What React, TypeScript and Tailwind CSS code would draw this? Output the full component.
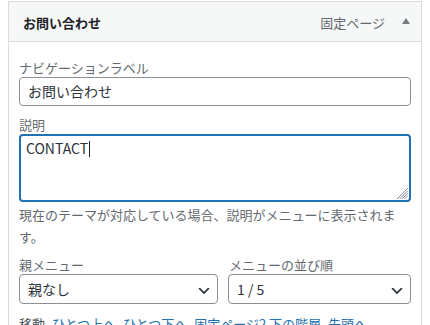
import React from "react";

const font = { fontFamily: '"Noto Sans CJK JP", "Noto Sans", sans-serif' };

function Chevron() {
  return (
    <svg
      viewBox="0 0 20 20"
      className="pointer-events-none absolute right-[5px] top-[8px] h-4 w-4"
    >
      <path d="M5 6l5 5 5-5 2 1-7 7-7-7 2-1z" fill="#2c3338" />
    </svg>
  );
}

function Grip() {
  return (
    <svg
      viewBox="0 0 14 14"
      className="pointer-events-none absolute bottom-[1px] right-[1px] h-[14px] w-[14px]"
    >
      <g stroke="#8c8f94" strokeWidth="1">
        <line x1="3" y1="14" x2="14" y2="3" />
        <line x1="5.5" y1="14" x2="14" y2="5.5" />
        <line x1="8" y1="14" x2="14" y2="8" />
        <line x1="10.5" y1="14" x2="14" y2="10.5" />
      </g>
    </svg>
  );
}

export default function App() {
  return (
    <div className="min-h-[325px] w-[430px] bg-white pt-px" style={font}>
      <div className="ml-2 w-[414px] border border-[#dcdcde] bg-white">
        <div className="flex h-10 items-center justify-between border-b border-[#dcdcde] bg-[#f6f7f7] pl-[14px] pr-[11px] pt-[2px]">
          <span className="text-[13px] font-bold text-[#1d2327]">お問い合わせ</span>
          <div className="flex items-center gap-[17px]">
            <span className="text-[13px] text-[#646970]">固定ページ</span>
            <svg viewBox="0 0 8 6" className="mb-[3px] h-[6px] w-[8px]">
              <path d="M0 6L4 0L8 6Z" fill="#787c82" />
            </svg>
          </div>
        </div>

        <div className="px-[10px] pt-[16px] text-[#2c3338]">
          <label className="block text-[13px] leading-[19px] text-[#646970]">
            ナビゲーションラベル
          </label>
          <div className="flex h-[29px] items-center rounded-[4px] border border-[#8c8f94] px-[8px] text-[14px]">
            お問い合わせ
          </div>

          <label className="mt-[10px] block text-[13px] leading-[18px] text-[#646970]">
            説明
          </label>
          <div className="relative h-[68px] rounded-[4px] border-2 border-[#2271b1] px-[5px] pt-[2px] text-[14px] leading-[20px]">
            CONTACT
            <span className="ml-px inline-block h-[16px] w-px bg-[#1d2327] align-[-3px]" />
            <Grip />
          </div>

          <p className="mt-[2px] text-[13px] leading-[22px] text-[#646970]">
            現在のテーマが対応している場合、説明がメニューに表示されます。
          </p>

          <div className="mt-[7px] flex gap-[10px]">
            <div className="w-[199px]">
              <label className="block text-[13px] leading-[19px] text-[#646970]">
                親メニュー
              </label>
              <div className="relative flex h-[30px] items-center rounded-[4px] border border-[#8c8f94] px-[8px] text-[14px]">
                親なし
                <Chevron />
              </div>
            </div>
            <div className="w-[183px]">
              <label className="block pl-[1px] text-[13px] leading-[19px] text-[#646970]">
                メニューの並び順
              </label>
              <div className="relative flex h-[30px] items-center rounded-[4px] border border-[#8c8f94] px-[8px] text-[14px]">
                1 / 5
                <Chevron />
              </div>
            </div>
          </div>

          <div className="mt-[10px] flex gap-[7px] text-[13px] leading-[19px]">
            <span className="text-[#50575e]">移動</span>
            <a className="text-[#2271b1]">ひとつ上へ</a>
            <a className="text-[#2271b1]">ひとつ下へ</a>
            <a className="text-[#2271b1]">固定ページ2 下の階層</a>
            <a className="text-[#2271b1]">先頭へ</a>
          </div>
        </div>
      </div>
    </div>
  );
}
